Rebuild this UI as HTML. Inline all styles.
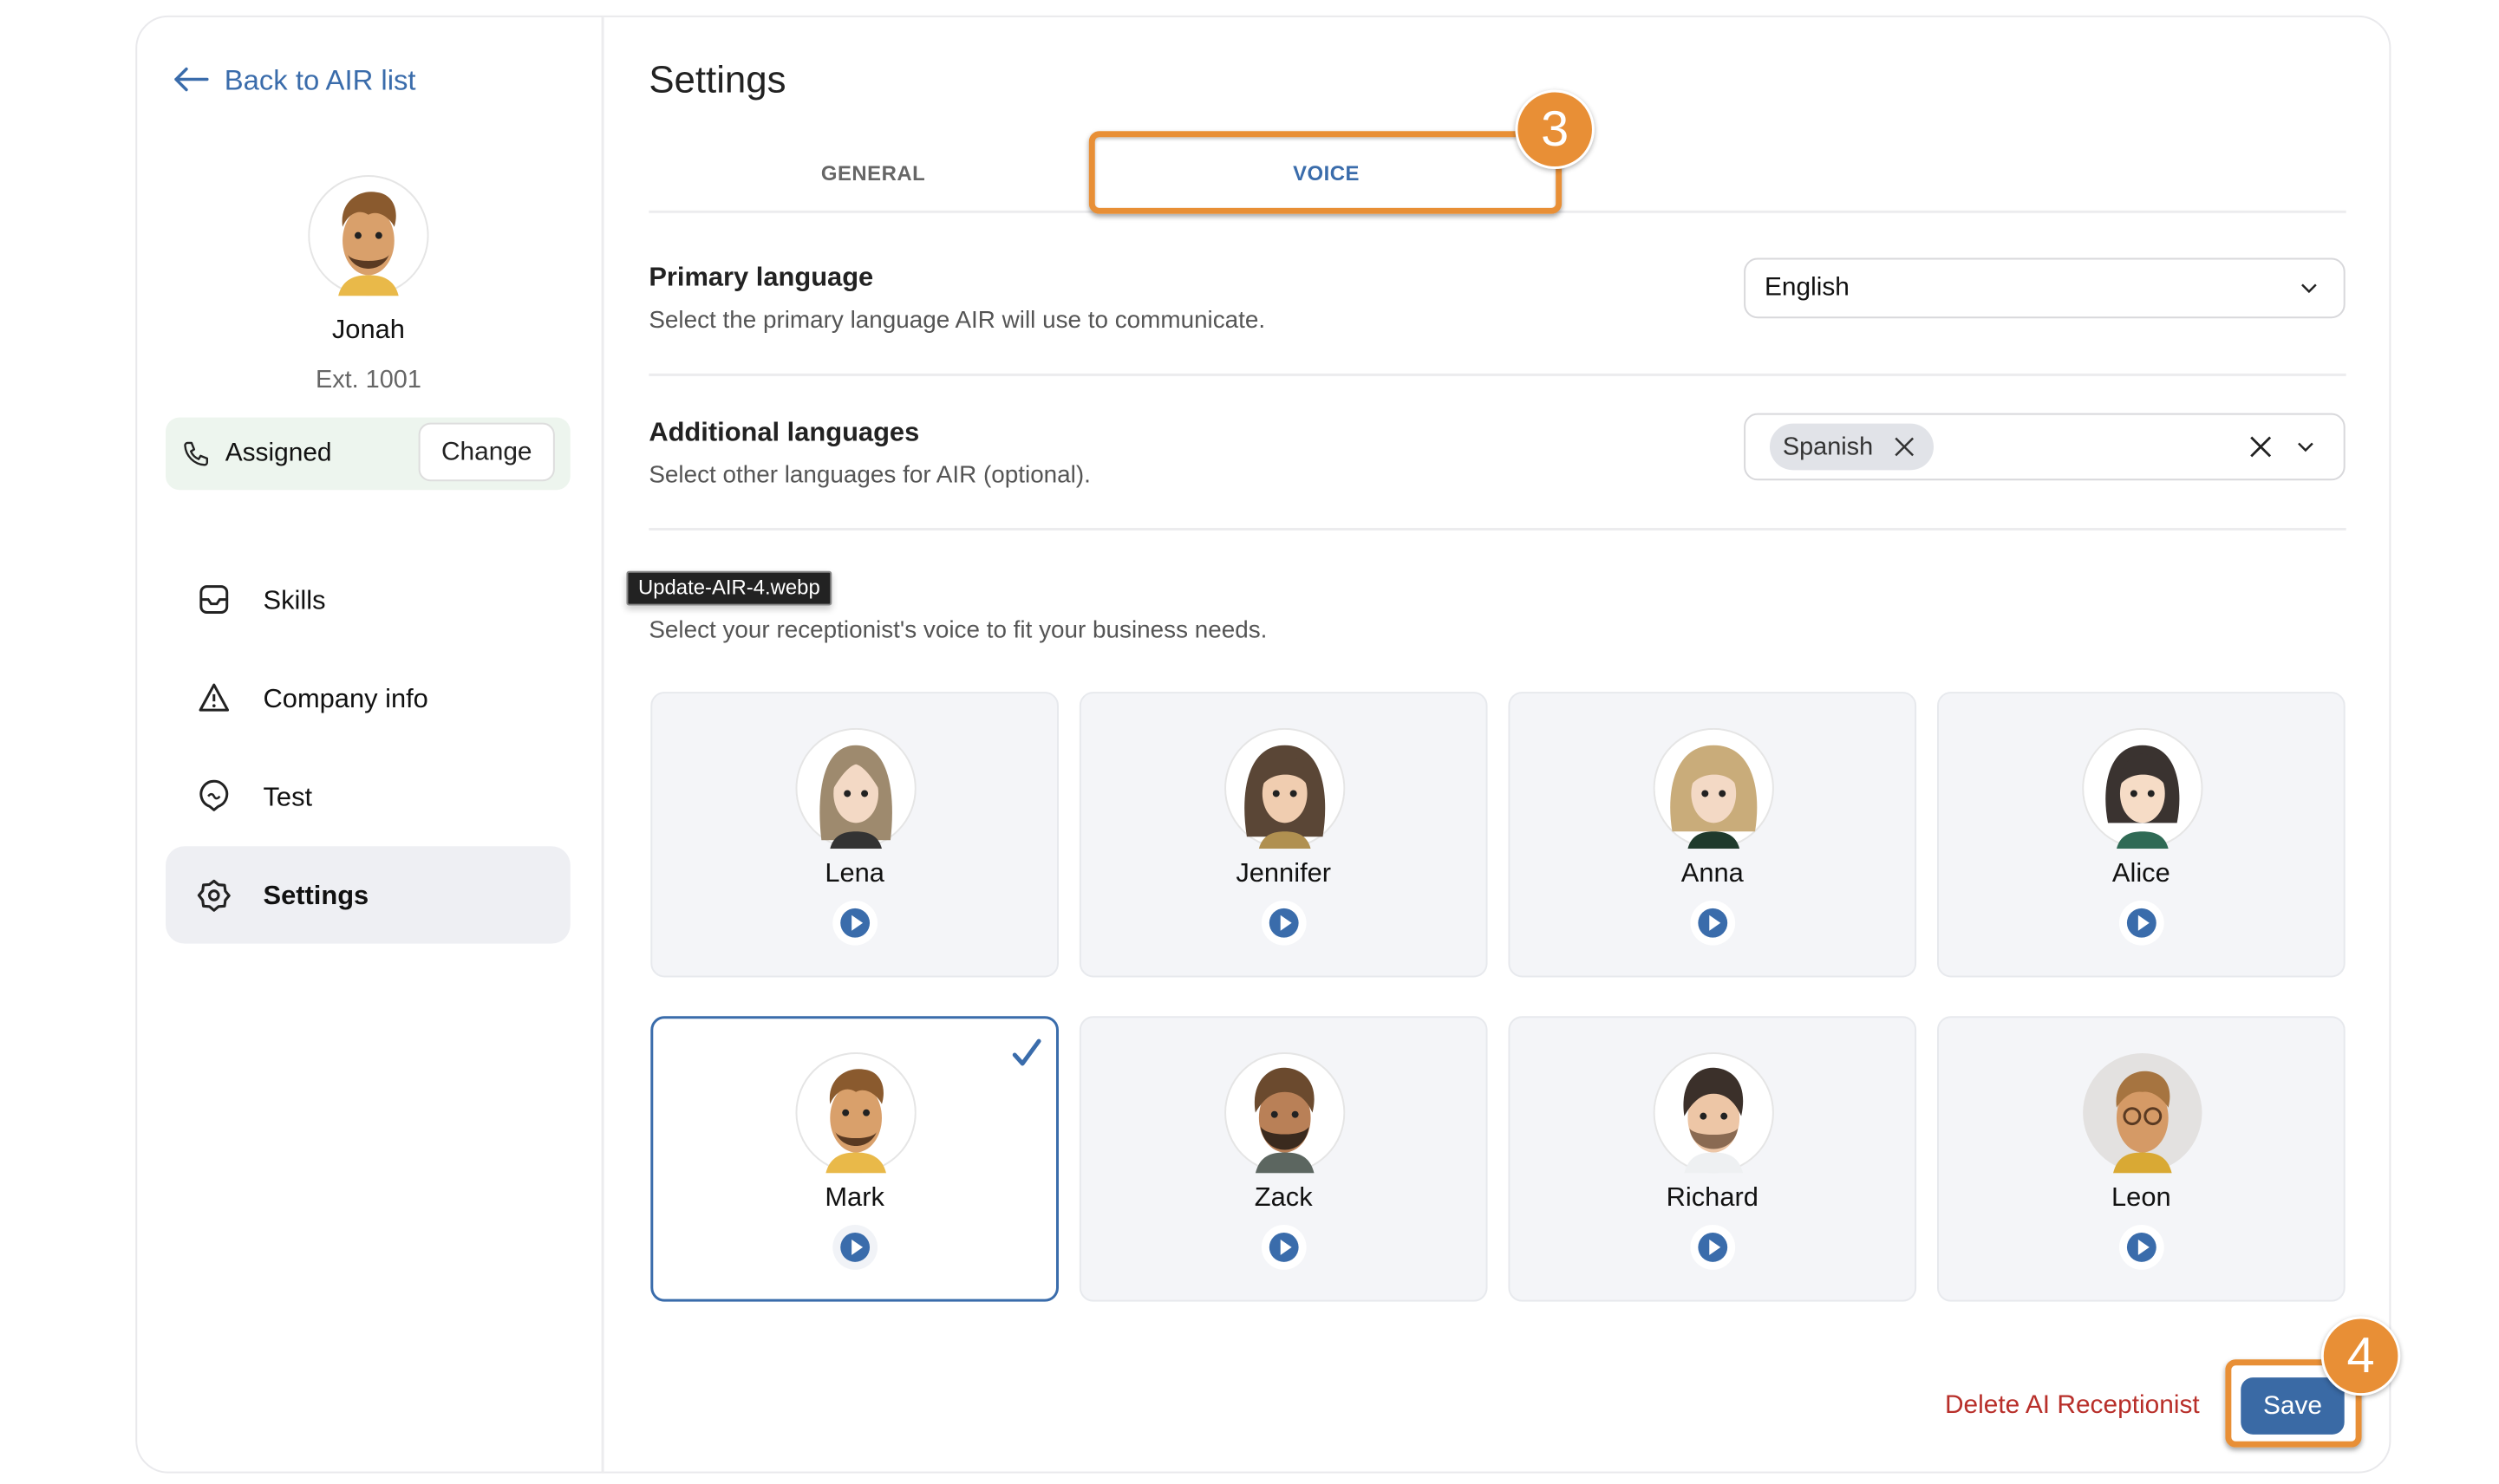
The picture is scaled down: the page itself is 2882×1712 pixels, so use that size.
<!DOCTYPE html>
<html><head><meta charset="utf-8"><style>
*{box-sizing:border-box;margin:0;padding:0}
body{width:2882px;height:1708px;background:#fff;font-family:"Liberation Sans",sans-serif;position:relative;overflow:hidden;color:#1a1a1a}
#w{position:absolute;left:0;top:0;width:2900px;height:1720px;transform:scale(0.9951);transform-origin:0 0}
.a{position:absolute}
.card{position:absolute;width:473px;height:331px;background:#f4f5f8;border:2px solid #e7e9ed;border-radius:16px}
.card.sel{background:#fff;border:3px solid #3a6cab}
.card svg.av{position:absolute;left:166px;top:40px}
.card .nm{position:absolute;left:0;width:100%;top:190px;text-align:center;font-size:31px;color:#111}
.card .pl{position:absolute;left:209px;top:240px;width:52px;height:52px;border-radius:50%;background:#fff}
.card.sel .pl{background:#f1f3f7}
.pl:after{content:"";position:absolute;left:9px;top:9px;width:34px;height:34px;border-radius:50%;background:#3a6cab}
.pl:before{content:"";position:absolute;left:22px;top:17px;border-left:13px solid #fff;border-top:9px solid transparent;border-bottom:9px solid transparent;z-index:2}
.mi{position:absolute;left:305px;font-size:31px;color:#111}
.desc{font-size:28px;color:#555}
.h{font-size:31px;font-weight:bold;color:#222}
.div{position:absolute;left:752px;width:1967px;height:3px;background:#ececee}
.badge{position:absolute;width:92px;height:92px;border-radius:50%;background:#e88f36;border:3px solid #fff;box-shadow:0 2px 6px rgba(0,0,0,.3);color:#fff;font-size:58px;text-align:center;line-height:86px}
</style></head><body><div id="w">
<div class="a" style="left:157px;top:18px;width:2614px;height:1690px;border:2px solid #e9e9ec;border-radius:38px;"></div>
<div class="a" style="left:697px;top:20px;width:3px;height:1688px;background:#ececee"></div>

<svg class="a" style="left:200px;top:76px" width="44" height="32" viewBox="0 0 44 32"><path d="M40 16H4M16 4L4 16l12 12" fill="none" stroke="#3a6cab" stroke-width="3.5" stroke-linecap="round" stroke-linejoin="round"/></svg>
<div class="a" style="left:260px;top:74px;font-size:33px;color:#3a6cab">Back to AIR list</div>

<svg class="a av" style="left:357px;top:203px" width="140" height="140" viewBox="0 0 140 140"><circle cx="70" cy="70" r="69" fill="#fff" stroke="#e5e5e5" stroke-width="2"/><path d="M35 140c5-20 20-24 35-24s30 4 35 24z" fill="#e9b949"/><ellipse cx="70" cy="76" rx="30" ry="40" fill="#d9a06b"/><path d="M40 60c-4-30 20-44 40-40 18 2 26 20 20 40-6-12-20-20-30-14-12-8-24 0-30 14z" fill="#8a5a2e"/><path d="M46 92c8 22 40 22 48 0-4 10-44 10-48 0z" fill="#5a3a22"/><circle cx="58" cy="70" r="4" fill="#222"/><circle cx="82" cy="70" r="4" fill="#222"/></svg>
<div class="a" style="left:0;width:854px;top:364px;text-align:center;font-size:31px;color:#111">Jonah</div>
<div class="a" style="left:0;width:854px;top:424px;text-align:center;font-size:29px;color:#666">Ext. 1001</div>

<div class="a" style="left:192px;top:484px;width:469px;height:84px;background:#edf5ee;border-radius:16px"></div>
<svg class="a" style="left:210px;top:509px" width="36" height="36" viewBox="0 0 24 24"><path d="M5 3h3l2 5-2.5 1.5a11 11 0 0 0 6 6L15 13l5 2v3a2 2 0 0 1-2 2A16 16 0 0 1 3 5a2 2 0 0 1 2-2" fill="none" stroke="#222" stroke-width="1.6" stroke-linejoin="round"/></svg>
<div class="a" style="left:261px;top:508px;font-size:30px;color:#111">Assigned</div>
<div class="a" style="left:485px;top:490px;width:158px;height:68px;background:#fff;border:2px solid #ddd;border-radius:14px;text-align:center;line-height:64px;font-size:30px;color:#222">Change</div>

<svg class="a" style="left:228px;top:675px" width="40" height="40" viewBox="0 0 24 24"><rect x="3" y="3" width="18" height="18" rx="4" fill="none" stroke="#222" stroke-width="1.8"/><path d="M3 12h5l2 3h4l2-3h5" fill="none" stroke="#222" stroke-width="1.8"/></svg>
<div class="mi" style="top:678px">Skills</div>
<svg class="a" style="left:228px;top:789px" width="40" height="40" viewBox="0 0 24 24"><path d="M12 3L2.5 20.5h19z" fill="none" stroke="#222" stroke-width="1.8" stroke-linejoin="round"/><path d="M12 9.5v5" stroke="#222" stroke-width="1.8"/><circle cx="12" cy="17.5" r="1.1" fill="#222"/></svg>
<div class="mi" style="top:792px">Company info</div>
<svg class="a" style="left:228px;top:903px" width="40" height="42" viewBox="0 0 24 25"><path d="M12 21.5l-3-2.5A9 9 0 1 1 15 19z" fill="none" stroke="#222" stroke-width="1.8" stroke-linejoin="round"/><path d="M8 12c1.5-2 3-2 4 0s2.5 2 4 0" fill="none" stroke="#222" stroke-width="1.5"/></svg>
<div class="mi" style="top:906px">Test</div>
<div class="a" style="left:192px;top:981px;width:469px;height:113px;background:#eeeff3;border-radius:22px"></div>
<svg class="a" style="left:227px;top:1017px" width="42" height="42" viewBox="0 0 24 24"><path d="M12 2.5l3 2.5 4 .3.5 3.900 2.5 3-2.5 3-.5 3.900-4 .3-3 2.500-3-2.500-4-.3-.5-3.900L2 12l2.500-3 .5-3.900 4-.3z" fill="none" stroke="#222" stroke-width="1.8" stroke-linejoin="round"/><circle cx="12" cy="12" r="3" fill="none" stroke="#222" stroke-width="1.8"/></svg>
<div class="mi" style="top:1020px;font-weight:bold">Settings</div>

<div class="a" style="left:752px;top:68px;font-size:44px;color:#222">Settings</div>
<div class="a" style="left:912px;width:200px;top:188px;text-align:center;font-size:24px;color:#666;font-weight:bold;letter-spacing:.5px">GENERAL</div>
<div class="a" style="left:1437px;width:200px;top:188px;text-align:center;font-size:24px;color:#3a6cab;font-weight:bold;letter-spacing:.5px">VOICE</div>
<div class="div" style="top:244px"></div>
<div class="a" style="left:1262px;top:152px;width:548px;height:96px;border:7px solid #e88f36;border-radius:12px;box-shadow:0 3px 6px rgba(0,0,0,.35), inset 0 2px 4px rgba(0,0,0,.25)"></div>
<div class="badge" style="left:1756px;top:104px">3</div>

<div class="a h" style="left:752px;top:303px">Primary language</div>
<div class="a desc" style="left:752px;top:355px">Select the primary language AIR will use to communicate.</div>
<div class="a" style="left:2021px;top:299px;width:697px;height:70px;border:2px solid #d8d8db;border-radius:16px"></div>
<div class="a" style="left:2045px;top:316px;font-size:30px;color:#111">English</div>
<svg class="a" style="left:2664px;top:325px" width="24" height="18" viewBox="0 0 24 18"><path d="M4 5l8 8 8-8" fill="none" stroke="#222" stroke-width="2.5"/></svg>
<div class="div" style="top:433px"></div>

<div class="a h" style="left:752px;top:483px">Additional languages</div>
<div class="a desc" style="left:752px;top:534px">Select other languages for AIR (optional).</div>
<div class="a" style="left:2021px;top:479px;width:697px;height:78px;border:2px solid #d8d8db;border-radius:16px"></div>
<div class="a" style="left:2051px;top:491px;width:190px;height:54px;background:#e1e3e8;border-radius:27px"></div>
<div class="a" style="left:2066px;top:502px;font-size:29px;color:#333">Spanish</div>
<svg class="a" style="left:2194px;top:505px" width="26" height="26" viewBox="0 0 26 26"><path d="M3 3l20 20M23 3L3 23" stroke="#333" stroke-width="2.5"/></svg>
<svg class="a" style="left:2606px;top:504px" width="28" height="28" viewBox="0 0 28 28"><path d="M3 3l22 22M25 3L3 25" stroke="#222" stroke-width="2.8"/></svg>
<svg class="a" style="left:2661px;top:510px" width="22" height="16" viewBox="0 0 22 16"><path d="M3 4l8 8 8-8" fill="none" stroke="#222" stroke-width="2.5"/></svg>
<div class="div" style="top:612px"></div>

<div class="a" style="left:726px;top:662px;width:238px;height:40px;background:#222;border:2px solid #888;border-radius:3px;color:#fff;font-size:24px;text-align:center;line-height:36px;box-shadow:0 4px 8px rgba(0,0,0,.2)">Update-AIR-4.webp</div>
<div class="a desc" style="left:752px;top:714px">Select your receptionist's voice to fit your business needs.</div>

<div class="card" style="left:754px;top:802px"><svg class="av" width="140" height="140" viewBox="0 0 140 140"><circle cx="70" cy="70" r="69" fill="#fff" stroke="#e5e5e5" stroke-width="2"/><path d="M30 130c-6-50 0-110 40-110s46 60 40 110z" fill="#9e8a6e"/><path d="M40 140c4-16 16-20 30-20s26 4 30 20z" fill="#333"/><ellipse cx="70" cy="76" rx="26" ry="34" fill="#f3d9c5"/><path d="M44 70c0-30 16-40 26-40s26 10 26 40c-8-14-18-26-26-28-8 2-18 14-26 28z" fill="#9e8a6e"/><circle cx="60" cy="76" r="4" fill="#222"/><circle cx="80" cy="76" r="4" fill="#222"/></svg><div class="nm">Lena</div><div class="pl"></div></div>
<div class="card" style="left:1251px;top:802px"><svg class="av" width="140" height="140" viewBox="0 0 140 140"><circle cx="70" cy="70" r="69" fill="#fff" stroke="#e5e5e5" stroke-width="2"/><path d="M26 126c-8-50 0-106 44-106s52 56 44 106z" fill="#5a4636"/><path d="M40 140c4-16 16-20 30-20s26 4 30 20z" fill="#b09050"/><ellipse cx="70" cy="76" rx="26" ry="34" fill="#f0cdb0"/><path d="M44 66c0-26 16-36 26-36s26 10 26 36c-10-16-40-16-52 0z" fill="#5a4636"/><circle cx="60" cy="76" r="4" fill="#222"/><circle cx="80" cy="76" r="4" fill="#222"/></svg><div class="nm">Jennifer</div><div class="pl"></div></div>
<div class="card" style="left:1748px;top:802px"><svg class="av" width="140" height="140" viewBox="0 0 140 140"><circle cx="70" cy="70" r="69" fill="#fff" stroke="#e5e5e5" stroke-width="2"/><path d="M22 120c-8-50 4-100 48-100s56 50 48 100z" fill="#c9ac7a"/><path d="M40 140c4-16 16-20 30-20s26 4 30 20z" fill="#1f3a2c"/><ellipse cx="70" cy="76" rx="26" ry="34" fill="#f3d9c5"/><path d="M44 66c0-26 16-36 26-36s26 10 26 36c-10-16-40-16-52 0z" fill="#c9ac7a"/><circle cx="60" cy="76" r="4" fill="#222"/><circle cx="80" cy="76" r="4" fill="#222"/></svg><div class="nm">Anna</div><div class="pl"></div></div>
<div class="card" style="left:2245px;top:802px"><svg class="av" width="140" height="140" viewBox="0 0 140 140"><circle cx="70" cy="70" r="69" fill="#fff" stroke="#e5e5e5" stroke-width="2"/><path d="M30 110c-8-40 0-90 40-90s48 50 40 90z" fill="#3a3330"/><path d="M40 140c4-16 16-20 30-20s26 4 30 20z" fill="#2f6a55"/><ellipse cx="70" cy="76" rx="26" ry="34" fill="#f6dcc6"/><path d="M44 66c0-26 16-36 26-36s26 10 26 36c-10-16-40-16-52 0z" fill="#3a3330"/><circle cx="60" cy="76" r="4" fill="#222"/><circle cx="80" cy="76" r="4" fill="#222"/></svg><div class="nm">Alice</div><div class="pl"></div></div>

<div class="card sel" style="left:754px;top:1178px"><svg class="av" style="left:165px;top:39px" width="140" height="140" viewBox="0 0 140 140"><circle cx="70" cy="70" r="69" fill="#fff" stroke="#e5e5e5" stroke-width="2"/><path d="M35 140c5-20 20-24 35-24s30 4 35 24z" fill="#e9b949"/><ellipse cx="70" cy="76" rx="30" ry="40" fill="#d9a06b"/><path d="M40 60c-4-30 20-44 40-40 18 2 26 20 20 40-6-12-20-20-30-14-12-8-24 0-30 14z" fill="#8a5a2e"/><path d="M46 92c8 22 40 22 48 0-4 10-44 10-48 0z" fill="#5a3a22"/><circle cx="58" cy="70" r="4" fill="#222"/><circle cx="82" cy="70" r="4" fill="#222"/></svg><div class="nm" style="top:189px">Mark</div><div class="pl" style="left:208px;top:239px"></div>
<svg class="a" style="left:415px;top:22px" width="36" height="36" viewBox="0 0 36 36"><path d="M4 20l9 10L32 4" fill="none" stroke="#3a6cab" stroke-width="5" stroke-linecap="round" stroke-linejoin="round"/></svg></div>
<div class="card" style="left:1251px;top:1178px"><svg class="av" width="140" height="140" viewBox="0 0 140 140"><circle cx="70" cy="70" r="69" fill="#fff" stroke="#e5e5e5" stroke-width="2"/><path d="M36 140c5-20 18-24 34-24s29 4 34 24z" fill="#5c6660"/><ellipse cx="70" cy="76" rx="30" ry="40" fill="#b98057"/><path d="M36 70c-6-36 16-54 36-52 22 2 38 20 30 52-6-14-16-24-32-24s-26 10-34 24z" fill="#6b4a2e"/><path d="M42 86c4 36 52 36 56 0-6 12-50 12-56 0z" fill="#3a2a1e"/><circle cx="58" cy="72" r="4" fill="#222"/><circle cx="82" cy="72" r="4" fill="#222"/></svg><div class="nm">Zack</div><div class="pl"></div></div>
<div class="card" style="left:1748px;top:1178px"><svg class="av" width="140" height="140" viewBox="0 0 140 140"><circle cx="70" cy="70" r="69" fill="#fff" stroke="#e5e5e5" stroke-width="2"/><path d="M36 140c5-20 18-24 34-24s29 4 34 24z" fill="#eef0f2"/><ellipse cx="70" cy="76" rx="30" ry="40" fill="#edc6a6"/><path d="M36 74c-6-40 16-58 36-56 22 2 38 20 30 56-6-14-16-26-32-26s-26 12-34 26z" fill="#3b302a"/><path d="M42 88c4 32 52 32 56 0-6 10-50 10-56 0z" fill="#8a6a52"/><circle cx="58" cy="74" r="4" fill="#222"/><circle cx="82" cy="74" r="4" fill="#222"/></svg><div class="nm">Richard</div><div class="pl"></div></div>
<div class="card" style="left:2245px;top:1178px"><svg class="av" width="140" height="140" viewBox="0 0 140 140"><circle cx="70" cy="70" r="69" fill="#e3e1e0"/><path d="M36 140c5-20 18-24 34-24s29 4 34 24z" fill="#d9a934"/><ellipse cx="70" cy="76" rx="30" ry="40" fill="#d59a66"/><path d="M40 64c-4-30 18-44 36-42 20 2 30 18 24 42-8-12-20-20-30-18-12-2-22 6-30 18z" fill="#a67440"/><circle cx="58" cy="74" r="9" fill="none" stroke="#5a3a22" stroke-width="3"/><circle cx="82" cy="74" r="9" fill="none" stroke="#5a3a22" stroke-width="3"/></svg><div class="nm">Leon</div><div class="pl"></div></div>

<div class="a" style="left:2254px;top:1612px;font-size:30px;color:#b82f2a">Delete AI Receptionist</div>
<div class="a" style="left:2579px;top:1576px;width:158px;height:102px;border:7px solid #e88f36;border-radius:12px;box-shadow:0 3px 6px rgba(0,0,0,.35)"></div>
<div class="a" style="left:2597px;top:1597px;width:120px;height:66px;background:#3a6aa5;border-radius:14px;color:#fff;font-size:30px;text-align:center;line-height:66px">Save</div>
<div class="badge" style="left:2690px;top:1526px">4</div>
</div></body></html>
